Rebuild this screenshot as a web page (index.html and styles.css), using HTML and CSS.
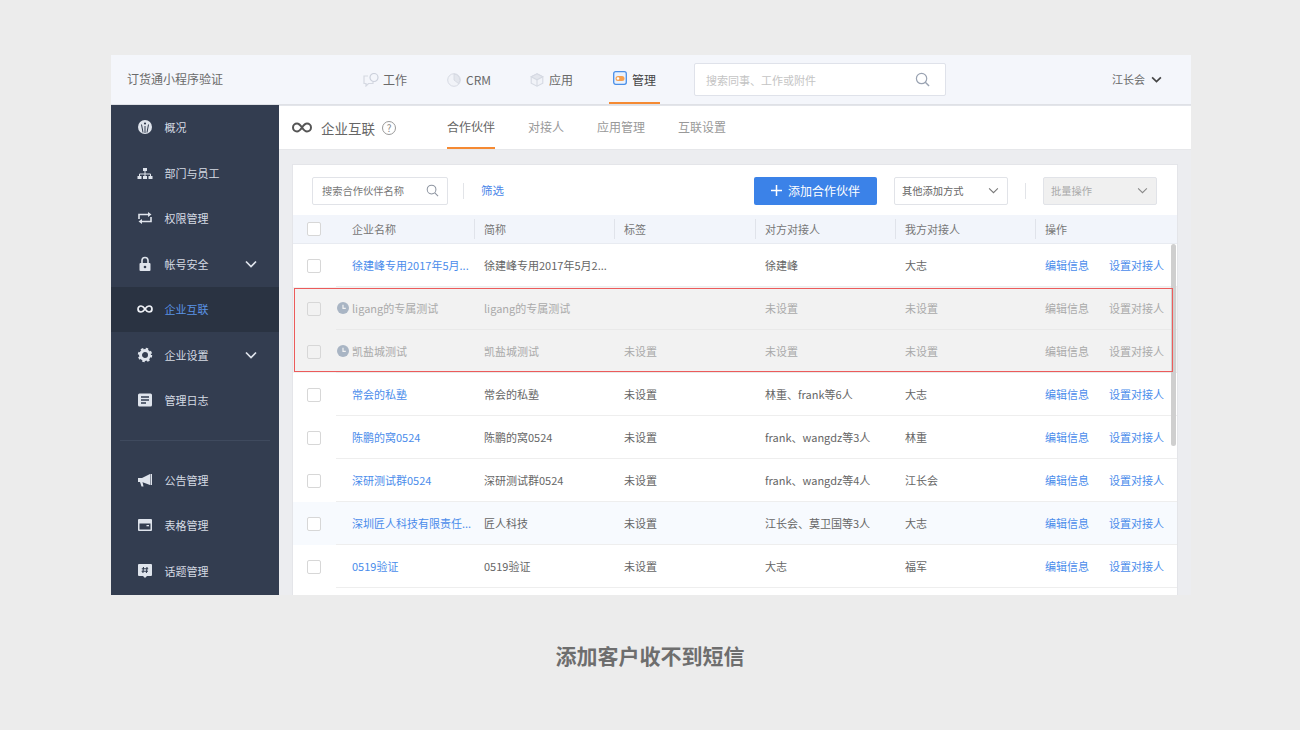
FILE: index.html
```html
<!DOCTYPE html>
<html lang="zh">
<head>
<meta charset="utf-8">
<title>添加客户收不到短信</title>
<link rel="stylesheet" href="styles.css">
</head>
<body>
<div class="stage">
  <div class="app">
    <header class="topbar">
      <div class="brand">订货通小程序验证</div>
      <nav class="topnav">
        <a class="topnav-item"><svg class="ti" viewBox="0 0 16 14"><path d="M5 3H1v7.500h2V13l2.500-2.500H10V9" fill="none" stroke="#d5d9e2" stroke-width="1.200"/><circle cx="11" cy="4.500" r="4" fill="#f4f6fb" stroke="#ccd1dc" stroke-width="1.200"/></svg><span>工作</span></a>
        <a class="topnav-item"><svg class="ti ti-crm" viewBox="0 0 14 14"><circle cx="7" cy="7" r="6.300" fill="#f1f3f8" stroke="#d6dae3" stroke-width="1"/><path d="M7 1v6l4.600 3.600A6 6 0 0 0 7 1z" fill="#e3e6ed" stroke="#d3d7e0" stroke-width=".8"/></svg><span>CRM</span></a>
        <a class="topnav-item"><svg class="ti ti-app" viewBox="0 0 14 14"><path d="M7 .8l5.800 3v6.400L7 13.200l-5.800-3V3.800z" fill="#f1f3f8" stroke="#d5d9e2" stroke-width="1.100"/><path d="M1.200 3.800L7 6.800l5.800-3L7 .8z" fill="#e3e6ed" stroke="#d5d9e2" stroke-width="1.100"/><path d="M7 6.800v6.400" fill="none" stroke="#d5d9e2" stroke-width="1.100"/></svg><span>应用</span></a>
        <a class="topnav-item is-active"><svg class="ti ti-mgr" viewBox="0 0 14 14"><rect x=".7" y=".7" width="12.600" height="12.600" rx="2" fill="#eaf2fd" stroke="#4a8fe8" stroke-width="1.300"/><rect x="2.500" y="5" width="9" height="5" rx="2.500" fill="#f5a050"/><circle cx="5" cy="7.500" r="1.300" fill="#fff"/></svg><span>管理</span></a>
      </nav>
      <div class="global-search">
        <span>搜索同事、工作或附件</span>
        <svg class="gs-icon" viewBox="0 0 16 16"><circle cx="7" cy="7" r="5.500" fill="none" stroke="#9aa3b2" stroke-width="1.300"/><path d="M11 11l4 4" stroke="#9aa3b2" stroke-width="1.500"/></svg>
      </div>
      <div class="user">江长会<svg class="user-chev" viewBox="0 0 12 8"><path d="M1 1.500l5 5 5-5" fill="none" stroke="#444" stroke-width="1.900"/></svg></div>
    </header>
    <div class="body">
      <aside class="sidebar">
        <ul class="menu menu-top">
          <li class="menu-item"><svg class="mi" viewBox="0 0 16 16"><circle cx="8" cy="8" r="7" fill="#dfe4ec"/><path d="M8 7v7M4.500 5.500l1.500 8M11.500 5.500l-1.500 8" stroke="#333d50" stroke-width="1"/><circle cx="8" cy="4.500" r="1.100" fill="#333d50"/></svg><span>概况</span></li>
          <li class="menu-item"><svg class="mi" viewBox="0 0 16 16"><rect x="6" y="3" width="4" height="3" fill="#dfe4ec"/><path d="M2.500 11.500V9h11v2.500M8 6v5.500" fill="none" stroke="#dfe4ec" stroke-width="1"/><rect x=".5" y="11" width="4" height="3" fill="#dfe4ec"/><rect x="6" y="11" width="4" height="3" fill="#dfe4ec"/><rect x="11.500" y="11" width="4" height="3" fill="#dfe4ec"/></svg><span>部门与员工</span></li>
          <li class="menu-item"><svg class="mi" viewBox="0 0 16 16"><path d="M2 9V4.500h10M14 7v4.500H4" fill="none" stroke="#dfe4ec" stroke-width="1.600"/><path d="M11 2l3.500 2.500L11 7zM5 9l-3.500 2.500L5 14z" fill="#dfe4ec"/></svg><span>权限管理</span></li>
          <li class="menu-item"><svg class="mi" viewBox="0 0 16 16"><path d="M5 7V4.500a3 3 0 0 1 6 0V7" fill="none" stroke="#dfe4ec" stroke-width="1.600"/><rect x="2.500" y="7" width="11" height="8" rx="1" fill="#dfe4ec"/><circle cx="8" cy="11" r="1.300" fill="#333d50"/></svg><span>帐号安全</span><svg class="chev" viewBox="0 0 12 8"><path d="M1 1.500l5 5 5-5" fill="none" stroke="#dfe4ec" stroke-width="1.700"/></svg></li>
          <li class="menu-item is-active"><svg class="mi" viewBox="0 0 16 16"><path d="M8 8C6.500 5.800 5.500 5 4 5a3 3 0 0 0 0 6c1.500 0 2.500-.8 4-3s2.500-3 4-3a3 3 0 0 1 0 6c-1.500 0-2.500-.8-4-3z" fill="none" stroke="#eef1f6" stroke-width="1.700"/></svg><span>企业互联</span></li>
          <li class="menu-item"><svg class="mi" viewBox="0 0 16 16"><circle cx="8" cy="8" r="4.500" fill="none" stroke="#dfe4ec" stroke-width="3"/><circle cx="8" cy="8" r="6" fill="none" stroke="#dfe4ec" stroke-width="2.400" stroke-dasharray="2.400 2.310"/></svg><span>企业设置</span><svg class="chev" viewBox="0 0 12 8"><path d="M1 1.500l5 5 5-5" fill="none" stroke="#dfe4ec" stroke-width="1.700"/></svg></li>
          <li class="menu-item"><svg class="mi" viewBox="0 0 16 16"><rect x="1" y="1.500" width="14" height="13" rx="1.500" fill="#dfe4ec"/><path d="M4 5h8M4 8h8M4 11h5" stroke="#333d50" stroke-width="1.300"/></svg><span>管理日志</span></li>
        </ul>
        <div class="menu-divider"></div>
        <ul class="menu">
          <li class="menu-item"><svg class="mi" viewBox="0 0 16 16"><path d="M1 6h4l8-4v11L5 10H1zM3 10l1.500 4.500h2L5.500 10" fill="#dfe4ec"/><rect x="13.500" y="2" width="1.500" height="11" fill="#dfe4ec"/></svg><span>公告管理</span></li>
          <li class="menu-item"><svg class="mi" viewBox="0 0 16 16"><rect x="1" y="2" width="14" height="12" rx="1" fill="#dfe4ec"/><rect x="2.500" y="6.500" width="11" height="6" fill="#333d50"/><rect x="9.500" y="8" width="2.500" height="1.300" fill="#dfe4ec"/></svg><span>表格管理</span></li>
          <li class="menu-item"><svg class="mi" viewBox="0 0 16 16"><path d="M2 1h12a1 1 0 0 1 1 1v10a1 1 0 0 1-1 1h-4l-2 2-2-2H2a1 1 0 0 1-1-1V2a1 1 0 0 1 1-1z" fill="#dfe4ec"/><path d="M6.500 4l-.6 6M10 4l-.6 6M4.800 5.800h6.400M4.600 8.200h6.400" stroke="#333d50" stroke-width="1.100"/></svg><span>话题管理</span></li>
        </ul>
      </aside>
      <main class="main">
        <div class="subbar">
          <svg class="sub-logo" viewBox="0 0 20 11"><path d="M10 5.500C8.300 3 7 1.500 5 1.500a4 4 0 0 0 0 8c2 0 3.300-1.500 5-4s3-4 5-4a4 4 0 0 1 0 8c-2 0-3.300-1.500-5-4z" fill="none" stroke="#555" stroke-width="2"/></svg>
          <span class="sub-title">企业互联</span>
          <span class="help">?</span>
          <nav class="tabs">
            <a class="tab is-active">合作伙伴</a>
            <a class="tab">对接人</a>
            <a class="tab">应用管理</a>
            <a class="tab">互联设置</a>
          </nav>
        </div>
        <section class="card">
          <div class="toolbar">
            <div class="input search-input"><span>搜索合作伙伴名称</span><svg class="si" viewBox="0 0 14 14"><circle cx="6" cy="6" r="4.700" fill="none" stroke="#8d94a0" stroke-width="1.100"/><path d="M9.500 9.500l3.500 3.500" stroke="#8d94a0" stroke-width="1.200"/></svg></div>
            <span class="vline"></span>
            <a class="filter">筛选</a>
            <button class="btn-primary"><svg class="plus" viewBox="0 0 11 11"><path d="M5.500 0v11M0 5.500h11" stroke="#fff" stroke-width="1.500"/></svg>添加合作伙伴</button>
            <div class="input select"><span>其他添加方式</span><svg class="sel-chev" viewBox="0 0 12 8"><path d="M1 1.500l5 5 5-5" fill="none" stroke="#777" stroke-width="1.200"/></svg></div>
            <span class="vline vline-2"></span>
            <div class="input select is-disabled"><span>批量操作</span><svg class="sel-chev" viewBox="0 0 12 8"><path d="M1 1.500l5 5 5-5" fill="none" stroke="#888" stroke-width="1.200"/></svg></div>
          </div>
          <div class="thead">
            <div class="check-cell"><span class="check"></span></div>
            <div class="cols head-cols">
              <div class="hc">企业名称</div><div class="hc">简称</div><div class="hc">标签</div><div class="hc">对方对接人</div><div class="hc">我方对接人</div><div class="hc">操作</div>
            </div>
          </div>
          <div class="tbody">
            <div class="row">
              <div class="check-cell"><span class="check"></span></div>
              <div class="cols"><a class="name">徐建峰专用2017年5月...</a><div>徐建峰专用2017年5月2...</div><div></div><div>徐建峰</div><div>大志</div><div class="ops"><a>编辑信息</a><a>设置对接人</a></div></div>
            </div>
            <div class="row is-pending">
              <div class="check-cell"><span class="check"></span></div>
              <div class="cols"><a class="name"><svg class="clock" viewBox="0 0 12 12"><circle cx="6" cy="6" r="6" fill="#a9b5c4"/><path d="M6 2.800V6.300h2.800" fill="none" stroke="#f2f2f2" stroke-width="1.200"/></svg>ligang的专属测试</a><div>ligang的专属测试</div><div></div><div>未设置</div><div>未设置</div><div class="ops"><a>编辑信息</a><a>设置对接人</a></div></div>
            </div>
            <div class="row is-pending">
              <div class="check-cell"><span class="check"></span></div>
              <div class="cols"><a class="name"><svg class="clock" viewBox="0 0 12 12"><circle cx="6" cy="6" r="6" fill="#a9b5c4"/><path d="M6 2.800V6.300h2.800" fill="none" stroke="#f2f2f2" stroke-width="1.200"/></svg>凯盐城测试</a><div>凯盐城测试</div><div>未设置</div><div>未设置</div><div>未设置</div><div class="ops"><a>编辑信息</a><a>设置对接人</a></div></div>
            </div>
            <div class="row">
              <div class="check-cell"><span class="check"></span></div>
              <div class="cols"><a class="name">常会的私塾</a><div>常会的私塾</div><div>未设置</div><div>林重、frank等6人</div><div>大志</div><div class="ops"><a>编辑信息</a><a>设置对接人</a></div></div>
            </div>
            <div class="row">
              <div class="check-cell"><span class="check"></span></div>
              <div class="cols"><a class="name">陈鹏的窝0524</a><div>陈鹏的窝0524</div><div>未设置</div><div>frank、wangdz等3人</div><div>林重</div><div class="ops"><a>编辑信息</a><a>设置对接人</a></div></div>
            </div>
            <div class="row">
              <div class="check-cell"><span class="check"></span></div>
              <div class="cols"><a class="name">深研测试群0524</a><div>深研测试群0524</div><div>未设置</div><div>frank、wangdz等4人</div><div>江长会</div><div class="ops"><a>编辑信息</a><a>设置对接人</a></div></div>
            </div>
            <div class="row is-hover">
              <div class="check-cell"><span class="check"></span></div>
              <div class="cols"><a class="name">深圳匠人科技有限责任...</a><div>匠人科技</div><div>未设置</div><div>江长会、莫卫国等3人</div><div>大志</div><div class="ops"><a>编辑信息</a><a>设置对接人</a></div></div>
            </div>
            <div class="row">
              <div class="check-cell"><span class="check"></span></div>
              <div class="cols"><a class="name">0519验证</a><div>0519验证</div><div>未设置</div><div>大志</div><div>福军</div><div class="ops"><a>编辑信息</a><a>设置对接人</a></div></div>
            </div>
            <div class="scroll-thumb"></div>
            <div class="highlight"></div>
          </div>
        </section>
      </main>
    </div>
  </div>
  <h1 class="caption">添加客户收不到短信</h1>
</div>
</body>
</html>
```
FILE: styles.css
```css
* { box-sizing: border-box; }
html, body { margin: 0; height: 100%; }
body {
  background: #ececec;
  font-family: "Noto Sans CJK SC", "Noto Sans", sans-serif;
  font-size: 12px;
  color: #555;
  overflow: hidden;
}
ul { list-style: none; margin: 0; padding: 0; }
.stage { width: 1300px; height: 730px; padding: 55px 109px 0 111px; }
.app { width: 1080px; height: 540px; overflow: hidden; display: flex; flex-direction: column; }

.topbar {
  height: 50px; flex: none;
  background: #f4f6fb;
  border-bottom: 1px solid #dfe1e6;
  display: flex; align-items: flex-start;
  padding-left: 16px;
}
.brand { width: 236px; line-height: 48px; color: #6a6a6a; font-size: 12px; }
.topnav { display: flex; height: 49px; }
.topnav-item {
  display: flex; align-items: center; height: 49px;
  color: #6a6a6a; margin-right: 40px;
  position: relative;
}
.topnav-item:nth-child(1) span { margin-left: 4px; }
.topnav-item:nth-child(2), .topnav-item:nth-child(3) { margin-right: 39px; }
.topnav-item span { margin-left: 5px; }
.ti { width: 16px; height: 14px; }
.ti-crm { width: 14px; height: 14px; }
.ti-app { width: 14px; height: 14px; }
.ti-mgr { width: 14px; height: 14px; margin: 0 0 3px 3px; }
.topnav-item.is-active { color: #444; margin-left: -2px; padding-right: 3px; margin-right: 35px; }
.topnav-item.is-active::after {
  content: ""; position: absolute; left: -1px; right: -1px; bottom: 0;
  height: 2px; background: #f58a33;
}
.global-search {
  width: 252px; height: 33px; margin-top: 8px;
  background: #fff; border: 1px solid #dfe2ea; border-radius: 2px;
  display: flex; align-items: center; justify-content: space-between;
  padding: 0 15px 0 11px;
  color: #c4c4c4; font-size: 11px;
}
.gs-icon { width: 15px; height: 15px; }
.user { margin-left: 166px; line-height: 48px; color: #6a6a6a; display: flex; align-items: center; font-size: 11px; }
.user-chev { width: 11px; height: 7px; margin-left: 6px; }

.body { flex: 1; display: flex; min-height: 0; }
.sidebar { width: 168px; flex: none; background: #333d50; color: #d6dbe4; font-size: 11px; }
.menu-top { margin-top: -0.5px; }
.menu-item {
  height: 45.5px; display: flex; align-items: center;
  padding-left: 26px; position: relative;
}
.mi { width: 16px; height: 16px; margin-right: 11.5px; flex: none; }
.menu-item.is-active { background: #2a3342; color: #5b93e6; }
.chev { width: 12px; height: 8px; position: absolute; left: 134px; top: 19px; }
.menu-divider { height: 1px; background: #3f4a5e; margin: 17px 9px 16px; }

.main { flex: 1; background: #ecedf0; min-width: 0; }
.subbar {
  height: 45px; background: #fff;
  display: flex; align-items: center; padding-left: 13px;
  border-top: 1px solid #e3e5ea;
  border-bottom: 1px solid #e6e7ea;
}
.sub-logo { width: 20px; height: 11px; flex: none; }
.sub-title { font-size: 13.5px; color: #666; margin-left: 9px; }
.help {
  width: 14px; height: 14px; border: 1px solid #999; border-radius: 50%;
  margin-left: 7px; font-size: 10px; color: #888;
  display: flex; align-items: center; justify-content: center; line-height: 1;
}
.tabs { display: flex; margin-left: 51px; height: 43px; }
.tab { line-height: 41px; color: #999; margin-right: 33px; position: relative; font-size: 12px; }
.tab.is-active { color: #666; }
.tab.is-active::after {
  content: ""; position: absolute; left: 0; right: 0; bottom: 0;
  height: 2px; background: #f58a33;
}

.card {
  margin: 14px 13px 0 13px;
  background: #fff; border: 1px solid #e4e5e9; border-bottom: 0;
  height: 460px;
  overflow: hidden;
}
.toolbar { height: 50px; display: flex; align-items: flex-start; padding: 12px 0 0 19px; }
.input {
  height: 28px; border: 1px solid #e1e3e8; border-radius: 2px; background: #fff;
  display: flex; align-items: center; justify-content: space-between;
  font-size: 10.25px; padding-bottom: 1px;
}
.search-input { width: 136px; padding: 0 8px 1px 9px; color: #777; }
.si { width: 13px; height: 13px; }
.vline { width: 1px; height: 16px; background: #e2e4e8; margin: 6px 0 0 15px; }
.filter { color: #4a86e8; margin: 3px 0 0 17px; line-height: 20px; width: 273px; font-size: 11.5px; }
.btn-primary {
  width: 123px; height: 28px; border: 0; border-radius: 2px;
  background: #3b82e8; color: #fff;
  font: inherit; padding: 0 0 1px;
  display: flex; align-items: center; justify-content: center;
}
.plus { width: 11px; height: 11px; margin-right: 6px; }
.select { width: 114px; margin-left: 17px; padding: 0 8px 1px 7px; color: #666; }
.sel-chev { width: 11px; height: 7px; }
.vline-2 { margin-left: 17px; }
.select.is-disabled { margin-left: 17px; background: #f0f0f0; color: #aaa; }

.thead { height: 29px; background: #f2f5fb; display: flex; border-bottom: 1px solid #e8ebf1; font-size: 11px; }
.check-cell { width: 43px; flex: none; padding-left: 14px; display: flex; align-items: center; }
.check { width: 14px; height: 14px; border: 1px solid #d7d7d7; border-radius: 2px; background: #fff; display: block; }
.cols {
  flex: 1; min-width: 0;
  display: grid;
  grid-template-columns: 148px 140px 141px 140px 140px 1fr;
  align-items: center;
}
.head-cols { color: #777; }
.hc { padding-left: 16px; position: relative; line-height: 28px; }
.hc + .hc { padding-left: 0; }
.hc + .hc::before {
  content: ""; position: absolute; left: -10px; top: 4px; width: 1px; height: 20px; background: #e0e3ea;
}
.tbody { position: relative; font-size: 11px; }
.row { height: 43px; display: flex; color: #666; }
.row .cols { border-bottom: 1px solid #eee; height: 43px; }
.name { color: #4a8ceb; padding-left: 16px; display: flex; align-items: center; white-space: nowrap; }
.clock { width: 12px; height: 12px; margin: 0 3px 0 -15px; flex: none; }
.ops { display: flex; justify-content: space-between; padding-right: 13px; white-space: nowrap; }
.ops a { color: #4a8ceb; }
.row.is-hover { background: #f7fafe; }
.row.is-pending { background: #f2f2f2; color: #aaa; }
.row.is-pending .name, .row.is-pending .ops a { color: #aaa; }
.row.is-pending .check { background: #f2f2f2; }
.row.is-pending .cols { border-bottom-color: #e9e9e9; }
.highlight {
  position: absolute; left: 1px; top: 44px; width: 879px; height: 84px;
  border: 1px solid #ec5b5b; pointer-events: none;
}
.scroll-thumb {
  position: absolute; left: 878px; top: 0; width: 5px; height: 202px;
  background: #cfcfcf; border-radius: 3px;
}
.caption {
  margin: 45px 0 0;
  width: 1078px; text-align: center;
  font-size: 21px; font-weight: 700; color: #6e6e6e; line-height: 30px;
}
```
